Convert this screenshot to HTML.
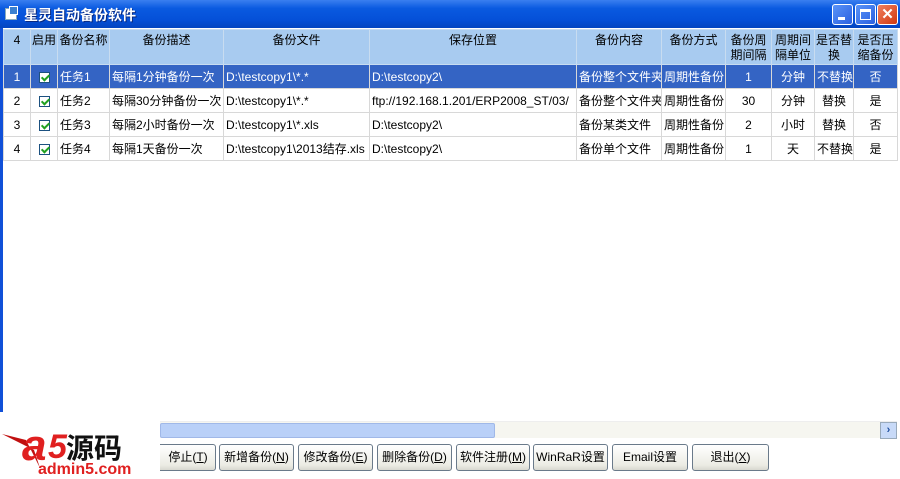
<!DOCTYPE html>
<html><head><meta charset="utf-8"><style>
*{margin:0;padding:0;box-sizing:border-box}
body{width:900px;height:476px;overflow:hidden;background:#fff;position:relative;font-family:"Liberation Sans","Noto Sans CJK SC",sans-serif;font-size:12px;color:#000}
.title{position:absolute;left:0;top:0;width:900px;height:28px;background:linear-gradient(#3a7ff0,#0a5ae0 30%,#0550d8 70%,#0345c0);}
.title .t{position:absolute;left:24px;top:5px;color:#fff;font-weight:bold;font-size:14px;text-shadow:1px 1px #0a2a80}
.ico{position:absolute;left:5px;top:8px;width:12px;height:12px;background:#fff;border:1px solid #8ab}
.ico:after{content:"";position:absolute;left:3px;top:-3px;width:7px;height:7px;background:#3a80d0;border:1px solid #fff}
.wb{position:absolute;top:4px;width:21px;height:21px;border:1px solid #fff;border-radius:3px;background:linear-gradient(135deg,#5a94f8,#2a60e0)}
.wb.x{background:linear-gradient(135deg,#f08060,#d03810)}
.lb{position:absolute;left:0;top:28px;width:3px;height:384px;background:#1050d8}
table{position:absolute;left:3px;top:29px;width:894px;border-collapse:collapse;table-layout:fixed}
td{border:1px solid #d8d8d8;height:24px;white-space:nowrap;overflow:hidden;padding:0 2px;font-size:12px}
tr.h td{background:#a8cbf0;height:35px;vertical-align:top;text-align:center;padding:3px 1px 0;border-color:#c8dcf0;line-height:15px;white-space:normal}
tr.s td{background:#3464c4;color:#fff}
.c{text-align:center}
.cb{display:inline-block;width:11px;height:11px;border:1px solid #1c5180;background:#fff;position:relative;vertical-align:middle}
.cb:after{content:"";position:absolute;left:3px;top:0px;width:3px;height:6px;border:solid #21a121;border-width:0 2px 2px 0;transform:rotate(45deg)}
.sb{position:absolute;left:160px;top:421px;width:737px;height:17px;background:#f6f6f0;border-top:1px solid #eee}
.th{position:absolute;left:0;top:1px;width:335px;height:15px;background:#b9d0f8;border:1px solid #a0b8e8;border-radius:2px}
.ar{position:absolute;right:0;top:0;width:17px;height:17px;background:#c8daf8;border:1px solid #9ab;color:#2050a0;font-size:11px;text-align:center;line-height:15px;font-weight:bold}
.btn{position:absolute;top:444px;height:27px;border:1px solid #6a7a8a;border-radius:3px;background:linear-gradient(#fff,#ececE4 80%,#d8d8d0);text-align:center;line-height:25px;font-size:12px}
.u{text-decoration:underline}
.logo{position:absolute;left:0;top:414px;width:160px;height:62px;background:#fff}
</style></head><body>
<div class="title"><div class="ico"></div><div class="t">星灵自动备份软件</div>
<div class="wb" style="left:832px"><div style="position:absolute;left:5px;top:12px;width:7px;height:3px;background:#fff"></div></div>
<div class="wb" style="left:855px"><div style="position:absolute;left:4px;top:4px;width:11px;height:11px;border:1px solid #fff;border-top-width:3px"></div></div>
<div class="wb x" style="left:877px;color:#fff;font-weight:bold;font-size:15px;text-align:center;line-height:19px">✕</div>
</div>
<div class="lb"></div>
<table>
<colgroup><col style="width:27px"><col style="width:27px"><col style="width:52px"><col style="width:114px"><col style="width:146px"><col style="width:207px"><col style="width:85px"><col style="width:64px"><col style="width:46px"><col style="width:43px"><col style="width:39px"><col style="width:44px"></colgroup>
<tr class="h"><td>4</td><td>启用</td><td>备份名称</td><td>备份描述</td><td>备份文件</td><td>保存位置</td><td>备份内容</td><td>备份方式</td><td>备份周期间隔</td><td>周期间隔单位</td><td>是否替换</td><td>是否压缩备份</td></tr>
<tr class="s"><td class="c">1</td><td class="c"><span class="cb"></span></td><td>任务1</td><td>每隔1分钟备份一次</td><td>D:\testcopy1\*.*</td><td>D:\testcopy2\</td><td>备份整个文件夹</td><td>周期性备份</td><td class="c">1</td><td class="c">分钟</td><td class="c">不替换</td><td class="c">否</td></tr>
<tr><td class="c">2</td><td class="c"><span class="cb"></span></td><td>任务2</td><td>每隔30分钟备份一次</td><td>D:\testcopy1\*.*</td><td>ftp://192.168.1.201/ERP2008_ST/03/</td><td>备份整个文件夹</td><td>周期性备份</td><td class="c">30</td><td class="c">分钟</td><td class="c">替换</td><td class="c">是</td></tr>
<tr><td class="c">3</td><td class="c"><span class="cb"></span></td><td>任务3</td><td>每隔2小时备份一次</td><td>D:\testcopy1\*.xls</td><td>D:\testcopy2\</td><td>备份某类文件</td><td>周期性备份</td><td class="c">2</td><td class="c">小时</td><td class="c">替换</td><td class="c">否</td></tr>
<tr><td class="c">4</td><td class="c"><span class="cb"></span></td><td>任务4</td><td>每隔1天备份一次</td><td>D:\testcopy1\2013结存.xls</td><td>D:\testcopy2\</td><td>备份单个文件</td><td>周期性备份</td><td class="c">1</td><td class="c">天</td><td class="c">不替换</td><td class="c">是</td></tr>
</table>
<div class="sb"><div class="th"></div><div class="ar">›</div></div>
<div class="btn" style="left:150px;width:66px;padding-left:10px">停止(<span class="u">T</span>)</div>
<div class="btn" style="left:219px;width:75px">新增备份(<span class="u">N</span>)</div>
<div class="btn" style="left:298px;width:75px">修改备份(<span class="u">E</span>)</div>
<div class="btn" style="left:377px;width:75px">删除备份(<span class="u">D</span>)</div>
<div class="btn" style="left:456px;width:74px">软件注册(<span class="u">M</span>)</div>
<div class="btn" style="left:533px;width:75px">WinRaR设置</div>
<div class="btn" style="left:612px;width:76px">Email设置</div>
<div class="btn" style="left:692px;width:77px">退出(<span class="u">X</span>)</div>
<div class="logo">
<svg width="160" height="62" viewBox="0 0 160 62">
<path d="M2 20 L26 26 L40 54 L34 36 Z" fill="#c01010"/>
<text x="22" y="46" font-family="Liberation Sans" font-weight="bold" font-style="italic" font-size="44" fill="#e02020">a</text>
<text x="48" y="44" font-family="Liberation Sans" font-weight="bold" font-style="italic" font-size="34" fill="#e02020">5</text>
<text x="66" y="44" font-family="Noto Sans CJK SC" font-weight="bold" font-size="28" fill="#111">源码</text>
<text x="38" y="60" font-family="Liberation Sans" font-weight="bold" font-size="16" fill="#e02020">admin5.com</text>
</svg>
</div>
</body></html>
